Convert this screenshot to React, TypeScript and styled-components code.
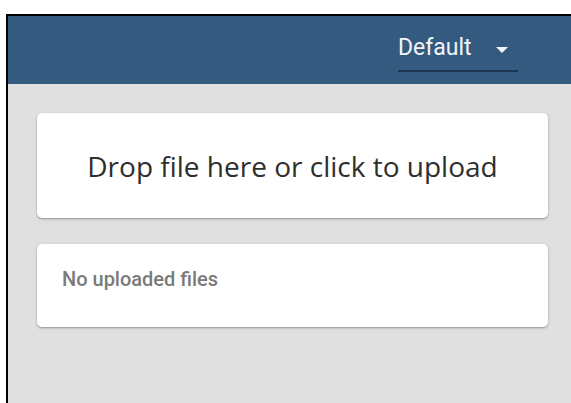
import React from "react";
import styled, { createGlobalStyle } from "styled-components";

const GlobalStyle = createGlobalStyle`
  html, body {
    margin: 0;
    padding: 0;
    background: #ffffff;
  }
  body {
    font-family: Roboto, "Liberation Sans", sans-serif;
  }
`;

const Frame = styled.div`
  margin: 14px 0 0 6px;
  height: 389px;
  border-top: 2px solid #000;
  border-left: 2px solid #000;
  background: #e0e0e0;
  display: flex;
  flex-direction: column;
  box-sizing: border-box;
`;

const Header = styled.header`
  height: 68px;
  flex: none;
  background: #345a80;
  display: flex;
  justify-content: flex-end;
  align-items: flex-start;
  padding-right: 53px;
  box-sizing: border-box;
`;

const Select = styled.div`
  width: 120px;
  height: 56px;
  box-sizing: border-box;
  border-bottom: 2px solid #1e3650;
  display: flex;
  align-items: center;
  justify-content: space-between;
  padding: 8px 10px 0 0;
  color: #f2f4f7;
  font-family: Roboto, "Liberation Sans", sans-serif;
  font-size: 23px;
  cursor: pointer;
`;

const Caret = styled.span`
  width: 0;
  height: 0;
  margin-top: 6px;
  border-left: 6.5px solid transparent;
  border-right: 6.5px solid transparent;
  border-top: 6px solid #f2f4f7;
`;

const Content = styled.main`
  padding: 29px 23px 0 29px;
  display: flex;
  flex-direction: column;
  gap: 26px;
`;

const Card = styled.div<{ $height: number }>`
  height: ${(p) => p.$height}px;
  background: #ffffff;
  border-radius: 5px;
  box-shadow: 0 1px 3px rgba(0, 0, 0, 0.25), 0 1px 1px rgba(0, 0, 0, 0.12);
  box-sizing: border-box;
`;

const DropZone = styled(Card)`
  display: flex;
  align-items: center;
  justify-content: center;
  cursor: pointer;
`;

const DropText = styled.span`
  font-family: "Open Sans", "Noto Sans", sans-serif;
  font-size: 28px;
  color: #2e2e2e;
`;

const FileList = styled(Card)`
  padding: 23px 0 0 25px;
`;

const EmptyText = styled.span`
  font-family: Roboto, "Liberation Sans", sans-serif;
  font-weight: 500;
  font-size: 20px;
  color: #7a7a7a;
`;

export default function App() {
  return (
    <>
      <GlobalStyle />
      <Frame>
        <Header>
          <Select>
            <span>Default</span>
            <Caret />
          </Select>
        </Header>
        <Content>
          <DropZone $height={105}>
            <DropText>Drop file here or click to upload</DropText>
          </DropZone>
          <FileList $height={83}>
            <EmptyText>No uploaded files</EmptyText>
          </FileList>
        </Content>
      </Frame>
    </>
  );
}
